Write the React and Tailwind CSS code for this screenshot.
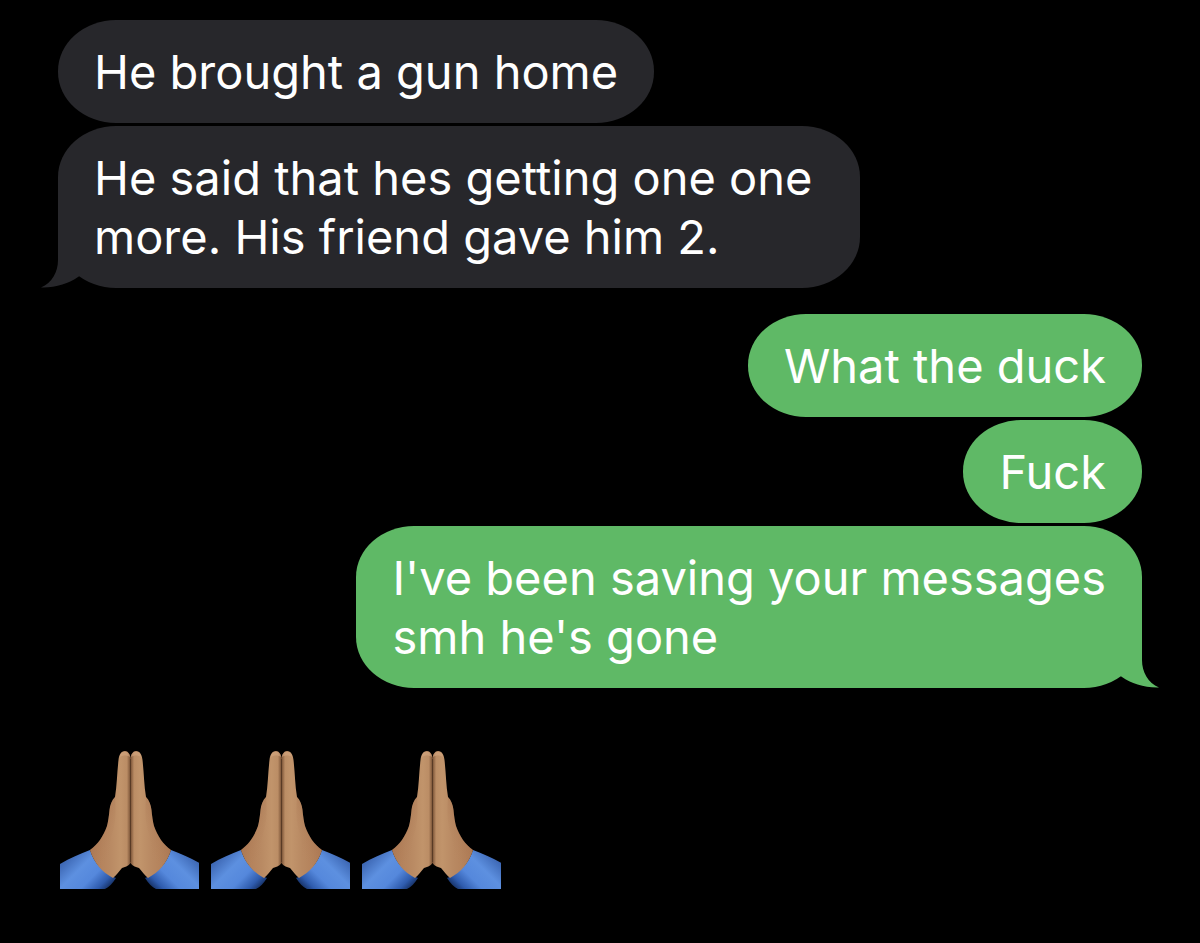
import { useId } from "react";

const messages = [
  { id: 1, from: "them", lines: ["He brought a gun home"] },
  { id: 2, from: "them", lines: ["He said that hes getting one one", "more. His friend gave him 2."], tail: true },
  { id: 3, from: "me", lines: ["What the duck"], first: true },
  { id: 4, from: "me", lines: ["Fuck"] },
  { id: 5, from: "me", lines: ["I've been saving your messages", "smh he's gone"], tail: true },
];

function Tail({ mine }) {
  return (
    <svg
      viewBox="0 0 40 56"
      aria-hidden="true"
      className={
        mine
          ? "absolute bottom-0 -right-[17px] w-10 h-14 -scale-x-100 text-[#5fb966]"
          : "absolute bottom-0 -left-[17px] w-10 h-14 text-[#27272b]"
      }
    >
      <path fill="currentColor" d="M17 0V28C17 40 11 51 0 55.500C14 56 28 51.500 37 45L40 43V0Z" />
    </svg>
  );
}

function Bubble({ message }) {
  const mine = message.from === "me";

  return (
    <li
      className={`relative w-fit pl-9 py-[22px] rounded-[58px/51px] ${
        mine ? "self-end bg-[#5fb966]" : "self-start bg-[#27272b]"
      } ${message.tail && !mine ? "pr-12" : "pr-9"} ${message.first ? "mt-[23px]" : ""}`}
    >
      {message.tail && <Tail mine={mine} />}
      <p className="relative text-[47px] leading-[59px] text-white">
        {message.lines.map((line) => (
          <span key={line} className="block">
            {line}
          </span>
        ))}
      </p>
    </li>
  );
}

function Hand({ id }) {
  return (
    <>
      <path
        fill={`url(#${id}-sleeve)`}
        d="M0 113C10 107 20 103 30 99C34 112 43 122 56 127C53 132 49 136 45 138H0Z"
      />
      <path
        fill={`url(#${id}-skin)`}
        d="M71 8C70 3 68 0 65 0C61 0 59 4 58.500 9C57 22 57 34 55 46C52 49 50 54 49.500 59C49 65 48 71 47 75C43 86 38 93 30 99C34 112 42 121 53 127C57 124 59 120 62 117C66 116 70 114 71 111Z"
      />
      <path
        fill={`url(#${id}-shade)`}
        d="M49.500 59C49 65 48 71 47 75C43 86 38 93 30 99C34 112 42 121 53 127L60 119C49 108 48 95 53 80C56 70 56 58 55 46C52 49 50 54 49.500 59Z"
      />
      <path fill="#d3a681" fillOpacity="0.6" d="M60 6C60 2 62 1 65 1C68 1 70 3 70 6C67 4 63 4 60 6Z" />
    </>
  );
}

function FoldedHands() {
  const id = useId();

  return (
    <svg viewBox="0 0 139 138" role="img" aria-label="Folded hands" className="w-[139px] h-[138px]">
      <defs>
        <linearGradient id={`${id}-skin`} x1="30" y1="0" x2="71" y2="0" gradientUnits="userSpaceOnUse">
          <stop offset="0" stopColor="#b07c56" />
          <stop offset="0.5" stopColor="#b98a63" />
          <stop offset="0.75" stopColor="#c1946b" />
          <stop offset="0.9" stopColor="#bb8d65" />
          <stop offset="1" stopColor="#6e482e" />
        </linearGradient>
        <linearGradient id={`${id}-shade`} x1="34" y1="80" x2="58" y2="90" gradientUnits="userSpaceOnUse">
          <stop offset="0" stopColor="#a06b49" stopOpacity="0.4" />
          <stop offset="1" stopColor="#b98a63" stopOpacity="0" />
        </linearGradient>
        <linearGradient id={`${id}-sleeve`} x1="8" y1="100" x2="50" y2="142" gradientUnits="userSpaceOnUse">
          <stop offset="0" stopColor="#345ca8" />
          <stop offset="0.35" stopColor="#5d90e0" />
          <stop offset="0.6" stopColor="#5588dc" />
          <stop offset="0.8" stopColor="#2f5cae" />
          <stop offset="1" stopColor="#071637" />
        </linearGradient>
      </defs>
      <Hand id={id} />
      <g transform="translate(141 0) scale(-1 1)">
        <Hand id={id} />
      </g>
      <path fill="none" stroke="#4b301f" strokeOpacity="0.7" d="M70.500 8V111" />
    </svg>
  );
}

export default function App() {
  return (
    <main className="min-h-screen bg-black px-[58px] pt-5 pb-[54px] font-['Inter','Liberation_Sans',sans-serif]">
      <ul className="flex flex-col gap-[3px]">
        {messages.map((m) => (
          <Bubble key={m.id} message={m} />
        ))}
      </ul>
      <div className="flex gap-3 mt-[63px] pl-0.5">
        <FoldedHands />
        <FoldedHands />
        <FoldedHands />
      </div>
    </main>
  );
}
